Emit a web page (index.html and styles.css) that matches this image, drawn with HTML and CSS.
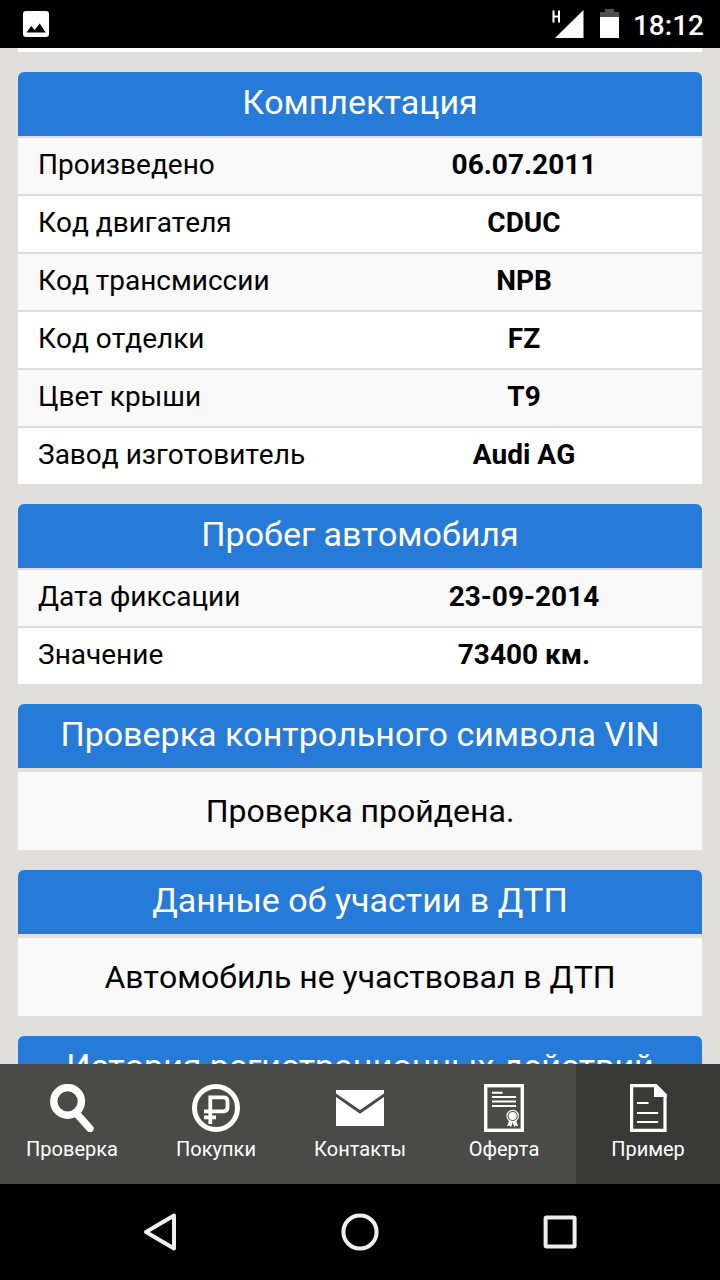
FILE: index.html
```html
<!DOCTYPE html>
<html lang="ru">

<head>
    <meta charset="UTF-8">
    <title>Пример отчета</title>
    <link rel="stylesheet" href="styles.css">
</head>

<body>
    <div class="statusbar">
        <svg class="picture" width="26" height="26" viewBox="0 0 26 26">
            <rect width="26" height="26" rx="3" fill="#fff"/>
            <path d="M3.500 21.500L8.200 15l3.500 4 5-6.500 6 9z" fill="#000"/>
        </svg>
        <div class="status-right">
            <svg class="signal" width="32" height="30" viewBox="0 0 32 30">
                <path d="M31.500 1v28H3z" fill="#fff"/>
                <path d="M1.500 1.500v12M7 1.500v12M1.500 7.500h6" fill="none" stroke="#fff" stroke-width="2"/>
            </svg>
            <svg class="battery" width="19" height="30" viewBox="0 0 19 30">
                <path d="M0 8V3h5V0h9v3h5v5z" fill="#4d4d4d"/>
                <path d="M0 8h19v21H0z" fill="#fff"/>
            </svg>
            <span class="clock">18:12</span>
        </div>
    </div>

    <div class="content">
        <div class="prev-card"></div>

        <div class="card">
            <h2>Комплектация</h2>
            <div class="row"><span>Произведено</span><b>06.07.2011</b></div>
            <div class="row"><span>Код двигателя</span><b>CDUC</b></div>
            <div class="row"><span>Код трансмиссии</span><b>NPB</b></div>
            <div class="row"><span>Код отделки</span><b>FZ</b></div>
            <div class="row"><span>Цвет крыши</span><b>T9</b></div>
            <div class="row"><span>Завод изготовитель</span><b>Audi AG</b></div>
        </div>

        <div class="card">
            <h2>Пробег автомобиля</h2>
            <div class="row"><span>Дата фиксации</span><b>23-09-2014</b></div>
            <div class="row"><span>Значение</span><b>73400 км.</b></div>
        </div>

        <div class="card">
            <h2>Проверка контрольного символа VIN</h2>
            <p class="message">Проверка пройдена.</p>
        </div>

        <div class="card">
            <h2>Данные об участии в ДТП</h2>
            <p class="message">Автомобиль не участвовал в ДТП</p>
        </div>

        <div class="card">
            <h2>История регистрационных действий</h2>
        </div>
    </div>

    <div class="tabs">
        <div class="tab">
            <svg width="48" height="48" viewBox="0 0 48 48" fill="none" stroke="#fff">
                <circle cx="19.600" cy="17.400" r="13.800" stroke-width="7.400"/>
                <path d="M28.500 29.500L42 44.500" stroke-width="7.400" stroke-linecap="round"/>
            </svg>
            <span>Проверка</span>
        </div>
        <div class="tab">
            <svg width="48" height="48" viewBox="0 0 48 48" fill="none" stroke="#fff">
                <circle cx="24" cy="24" r="21.500" stroke-width="5"/>
                <path d="M18.300 40V13.300H31.500q4 0 4 4v6q0 4-4 4H12M12 33.300h12" stroke-width="3.800"/>
            </svg>
            <span>Покупки</span>
        </div>
        <div class="tab">
            <svg width="48" height="48" viewBox="0 0 48 48" fill="#fff">
                <path d="M0 6h48v3.500L24 26 0 9.500z"/>
                <path d="M0 13l24 16.700L48 13v29H0z"/>
            </svg>
            <span>Контакты</span>
        </div>
        <div class="tab">
            <svg width="48" height="48" viewBox="0 0 48 48" fill="none" stroke="#fff">
                <rect x="5.700" y="1.700" width="36.600" height="44.600" stroke-width="3.400"/>
                <path d="M12 8.800h10.500M12 13h24M12 17.400h24M12 21.900h24" stroke-width="2"/>
                <circle cx="32.700" cy="32" r="5.700" stroke-width="1.200"/>
                <circle cx="32.700" cy="32" r="4" fill="#fff" stroke="none"/>
                <path d="M29 37l-2 5.200 2.700-.7 1.300 1.800 1.700-5 1.700 5 1.300-1.800 2.500.7-2-5.200-3.500 1.300z" fill="#fff" stroke="none"/>
            </svg>
            <span>Оферта</span>
        </div>
        <div class="tab active">
            <svg width="48" height="48" viewBox="0 0 48 48" fill="none" stroke="#fff">
                <path d="M31.500 1.600H7.600v44.800h33.400V11z" stroke-width="3.200"/>
                <path d="M30 0h2.500l10.200 10.200V13H30z" fill="#fff" stroke="none"/>
                <path d="M13 19h11.500M13 29h21.200M13 38h21.200" stroke-width="2"/>
            </svg>
            <span>Пример</span>
        </div>
    </div>

    <div class="navbar">
        <svg width="40" height="40" viewBox="0 0 40 40">
            <path d="M34 3.500v33L6 20z"/>
        </svg>
        <svg width="40" height="40" viewBox="0 0 40 40">
            <circle cx="20" cy="20" r="16.600"/>
        </svg>
        <svg width="40" height="40" viewBox="0 0 40 40">
            <rect x="5.600" y="5.600" width="29" height="29" rx="1"/>
        </svg>
    </div>
</body>

</html>
```

FILE: styles.css
```css
* {
    box-sizing: border-box;
}

body {
    margin: 0;
    height: 1280px;
    display: flex;
    flex-direction: column;
    overflow: hidden;
    background: #e0dfdb;
    color: #000;
    font-family: Roboto, sans-serif;
    font-kerning: none;
}

.statusbar {
    height: 48px;
    flex: none;
    display: flex;
    align-items: center;
    justify-content: space-between;
    padding: 0 16px 0 23px;
    background: #000;
    color: #fff;
}

.status-right {
    display: flex;
    align-items: center;
}

.battery {
    margin: 0 14px 0 16px;
}

.clock {
    font-size: 28px;
    font-weight: 500;
    line-height: 48px;
    padding-top: 4px;
}

.content {
    height: 1016px;
    flex: none;
    overflow: hidden;
    padding: 0 18px;
}

.prev-card {
    height: 4px;
    margin-bottom: 20px;
    background: #fff;
}

.card {
    margin-bottom: 20px;
}

h2 {
    margin: 0;
    height: 64px;
    line-height: 60px;
    border-radius: 6px 6px 0 0;
    background: #267bd8;
    color: #fff;
    font-size: 34px;
    font-weight: 400;
    text-align: center;
    white-space: nowrap;
}

.row {
    display: flex;
    height: 58px;
    line-height: 54px;
    border-top: 2px solid #dddddd;
    background: #fff;
    font-size: 28px;
}

.row:nth-child(even) {
    background: #f9f9f9;
}

.row span {
    width: 328px;
    padding-left: 20px;
}

.row b {
    flex: 1;
    text-align: center;
}

.message {
    margin: 4px 0 0;
    height: 78px;
    line-height: 78px;
    background: #f9f9f9;
    font-size: 32px;
    text-align: center;
}

.tabs {
    height: 120px;
    flex: none;
    display: flex;
    background: #4a4b48;
    color: #fff;
}

.tab {
    flex: 1;
    display: flex;
    flex-direction: column;
    align-items: center;
    padding-top: 20px;
    font-size: 20px;
    line-height: 24px;
}

.tab span {
    margin-top: 5px;
}

.tab.active {
    background: #393a37;
}

.navbar {
    height: 96px;
    flex: none;
    display: flex;
    align-items: center;
    justify-content: center;
    gap: 160px;
    background: #000;
}

.navbar svg {
    fill: none;
    stroke: #eee;
    stroke-width: 4;
    stroke-linejoin: round;
}
```
